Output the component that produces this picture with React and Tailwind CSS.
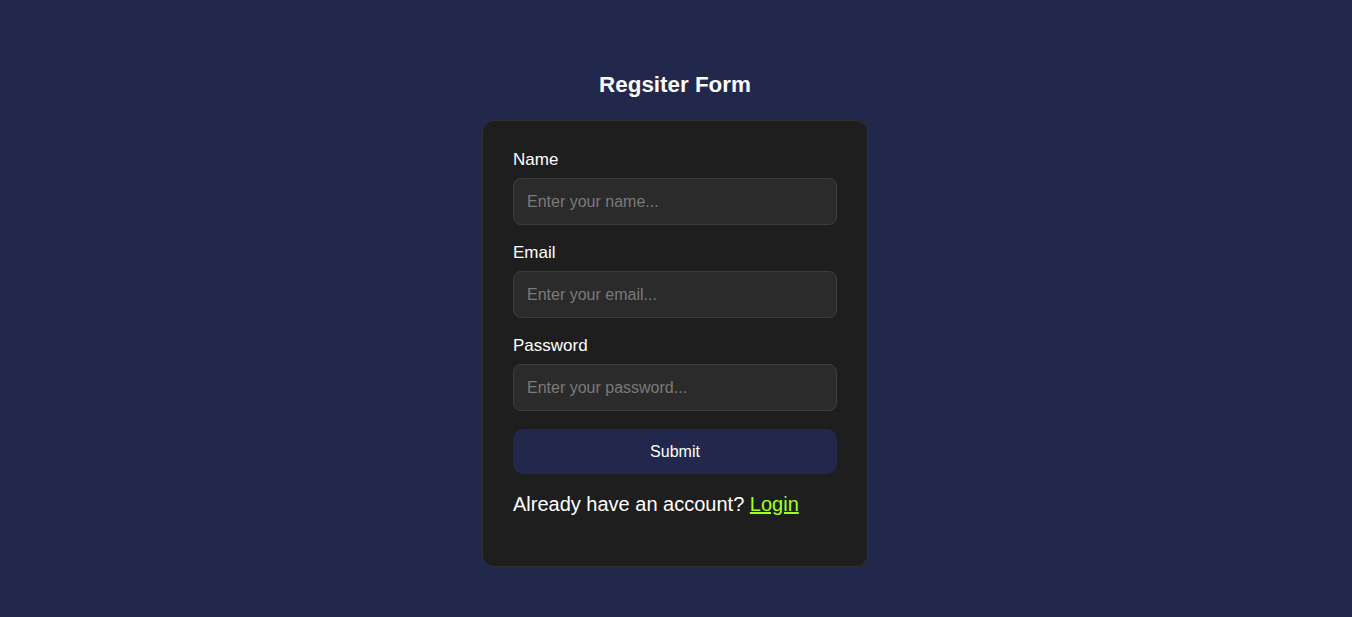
export default function App() {
  const fields = [
    { label: "Name", type: "text", placeholder: "Enter your name..." },
    { label: "Email", type: "email", placeholder: "Enter your email..." },
    { label: "Password", type: "password", placeholder: "Enter your password..." },
  ];

  return (
    <div className="min-h-screen bg-[#22284b] font-['Liberation_Sans',Arial,sans-serif] flex flex-col items-center pt-[72px]">
      <h1 className="text-[22.4px] leading-[25px] font-bold text-white mr-[2px]">Regsiter Form</h1>

      <form
        className="mt-[23px] mr-[2px] w-[386px] bg-[#1e1e1e] border border-[#303030] rounded-xl px-[30px] pt-[29px] pb-[50px] flex flex-col"
        onSubmit={(e) => e.preventDefault()}
      >
        {fields.map((f) => (
          <div key={f.label} className="flex flex-col mb-[18px]">
            <label className="text-[17px] leading-5 text-white mb-2">{f.label}</label>
            <input
              type={f.type}
              placeholder={f.placeholder}
              className="h-[47px] w-full bg-[#2b2b2b] border border-[#3e3e3e] rounded-lg px-[13px] text-base text-white placeholder-[#7a7a7a] outline-none"
            />
          </div>
        ))}

        <button
          type="submit"
          className="h-[45px] w-full bg-[#22284b] rounded-[10px] text-base text-white"
        >
          Submit
        </button>

        <p className="mt-[18px] text-[20px] leading-6 text-white">
          Already have an account?{" "}
          <a href="#" className="text-[#a3ff1f] underline">
            Login
          </a>
        </p>
      </form>
    </div>
  );
}
